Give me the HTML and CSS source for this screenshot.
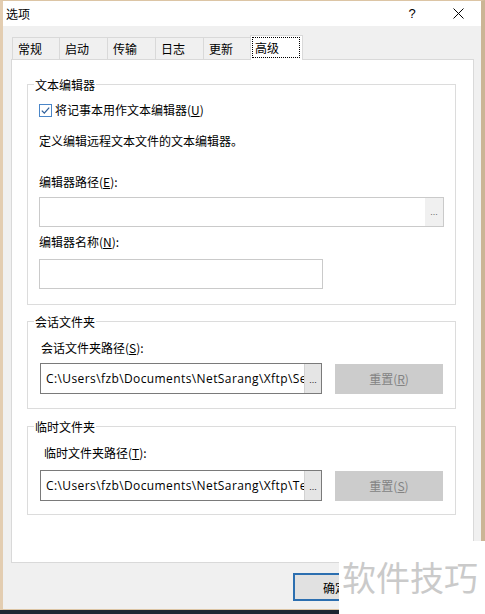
FILE: index.html
```html
<!DOCTYPE html>
<html lang="zh-CN">
<head>
<meta charset="utf-8">
<title>选项</title>
<link rel="stylesheet" href="styles.css">
</head>
<body>
<div class="window">
  <div class="titlebar">
    <span class="title">选项</span>
    <span class="help">?</span>
    <span class="close">
      <svg width="11" height="11" viewBox="0 0 11 11"><path d="M0.5 0.5 L10.5 10.5 M10.5 0.5 L0.5 10.5" stroke="#000" stroke-width="1" fill="none"/></svg>
    </span>
  </div>
  <div class="tabs">
    <div class="tab w48">常规</div>
    <div class="tab w49">启动</div>
    <div class="tab w49">传输</div>
    <div class="tab w49">日志</div>
    <div class="tab w48">更新</div>
    <div class="tab active"><span class="focus">高级</span></div>
  </div>
  <div class="panel">
    <div class="group g1">
      <div class="legend">文本编辑器</div>
      <div class="check">
        <svg class="box" width="13" height="13" viewBox="0 0 13 13"><rect x="0.5" y="0.5" width="12" height="12" fill="#fff" stroke="#4a86c8"/><path d="M2.8 6.6 L5.3 9.1 L10.2 3.6" stroke="#2f5f9a" stroke-width="1.3" fill="none"/></svg>
        <span class="line">将记事本用作文本编辑器(<u>U</u>)</span>
      </div>
      <div class="line desc">定义编辑远程文本文件的文本编辑器。</div>
      <div class="line lbl-path">编辑器路径(<u>E</u>):</div>
      <div class="field wide"><span class="browse-light">...</span></div>
      <div class="line lbl-name">编辑器名称(<u>N</u>):</div>
      <div class="field name"></div>
    </div>
    <div class="group g2">
      <div class="legend">会话文件夹</div>
      <div class="line lbl-g2">会话文件夹路径(<u>S</u>):</div>
      <div class="row r2">
        <div class="path"><span class="ptext">C:\Users\fzb\Documents\NetSarang\Xftp\Sessions</span><span class="pbtn">...</span></div>
        <div class="reset">重置(<u>R</u>)</div>
      </div>
    </div>
    <div class="group g3">
      <div class="legend">临时文件夹</div>
      <div class="line lbl-g3">临时文件夹路径(<u>T</u>):</div>
      <div class="row r3">
        <div class="path"><span class="ptext">C:\Users\fzb\Documents\NetSarang\Xftp\Temp</span><span class="pbtn">...</span></div>
        <div class="reset">重置(<u>S</u>)</div>
      </div>
    </div>
  </div>
  <div class="footer">
    <button class="btn ok">确定</button>
    <button class="btn">取消</button>
  </div>
</div>
<div class="watermark">软件技巧</div>
</body>
</html>
```
FILE: styles.css
```css
html, body {
  margin: 0;
  padding: 0;
}
body {
  width: 485px;
  height: 614px;
  position: relative;
  overflow: hidden;
  background: #1c2532;
  font-family: "Noto Sans CJK SC", "Noto Sans", sans-serif;
  font-size: 12px;
  color: #000;
}
.window {
  box-sizing: border-box;
  width: 485px;
  height: 610px;
  border-left: 3px solid #e3cdb1;
  border-top: 1px solid #dcc5a5;
  border-right: 4px solid #cbb595;
  border-bottom: 1px solid #dcc5a5;
  background: #f0f0f0;
  display: flex;
  flex-direction: column;
}
.titlebar {
  height: 25px;
  flex: none;
  background: #fff;
  display: flex;
  align-items: center;
}
.title {
  padding-left: 3px;
  line-height: 25px;
}
.help {
  margin-left: auto;
  width: 46px;
  text-align: center;
  font-family: "Liberation Sans", sans-serif;
  font-size: 13px;
  line-height: 25px;
}
.close {
  width: 46px;
  height: 25px;
  display: flex;
  align-items: center;
  justify-content: center;
}
.tabs {
  flex: none;
  display: flex;
  align-items: flex-end;
  height: 24px;
  margin-top: 9px;
  padding-left: 9px;
}
.tab {
  box-sizing: border-box;
  height: 22px;
  border: 1px solid #d9d9d9;
  border-bottom: none;
  background: #f0f0f0;
  line-height: 21px;
  padding-left: 5px;
  margin-left: -1px;
}
.tab:first-child {
  margin-left: 0;
}
.w48 { width: 48px; }
.w49 { width: 49px; }
.tab.active {
  width: 53px;
  height: 25px;
  margin-bottom: -1px;
  background: #fff;
  position: relative;
  z-index: 1;
  padding: 1px 2px 0 1px;
}
.focus {
  display: block;
  border: 1px dotted #000;
  line-height: 19px;
  padding-left: 2px;
}
.panel {
  flex: none;
  box-sizing: border-box;
  width: 463px;
  height: 504px;
  margin-left: 8px;
  border: 1px solid #d9d9d9;
  background: #fff;
  padding: 24px 0 0 15px;
}
.group {
  box-sizing: border-box;
  width: 429px;
  border: 1px solid #dcdcdc;
  padding: 0 11px;
}
.g1 { padding-bottom: 15px; }
.g2 { margin-top: 16px; padding-bottom: 14px; }
.g3 { margin-top: 17px; padding-bottom: 13px; }
.legend {
  width: fit-content;
  margin: -8px 0 0 -5px;
  padding: 0 1px;
  background: #fff;
  line-height: 16px;
}
.line {
  line-height: 16px;
}
.check {
  display: flex;
  align-items: center;
  gap: 3px;
  height: 16px;
  margin-top: 9px;
}
.box {
  flex: none;
  display: block;
}
.desc { margin-top: 15px; }
.lbl-path { margin-top: 25px; }
.lbl-name { margin-top: 7px; }
.field {
  box-sizing: border-box;
  height: 30px;
  border: 1px solid #cacaca;
  background: #fff;
  display: flex;
  justify-content: flex-end;
}
.wide {
  width: 405px;
  margin-top: 7px;
}
.name {
  width: 284px;
  margin-top: 9px;
}
.browse-light {
  width: 18px;
  background: #f0f0f0;
  color: #6a6a6a;
  font-family: "Liberation Sans", sans-serif;
  font-size: 9px;
  line-height: 9px;
  text-align: center;
  display: flex;
  align-items: flex-end;
  justify-content: center;
  padding-bottom: 9px;
  box-sizing: border-box;
}
.lbl-g2 { margin-top: 10px; margin-left: 2px; }
.lbl-g3 { margin-top: 10px; margin-left: 5px; }
.row {
  display: flex;
  align-items: center;
  margin-left: 1px;
}
.r2 { margin-top: 7px; }
.r3 { margin-top: 9px; }
.path {
  box-sizing: border-box;
  width: 282px;
  height: 31px;
  border: 1px solid #7a7a7a;
  background: #fff;
  display: flex;
}
.ptext {
  flex: 1;
  overflow: hidden;
  white-space: nowrap;
  padding-left: 5px;
  line-height: 29px;
  font-family: "Open Sans", "Noto Sans", sans-serif;
  font-size: 12px;
  letter-spacing: 0.4px;
}
.pbtn {
  flex: none;
  box-sizing: border-box;
  width: 17px;
  background: #e5e5e5;
  border-left: 1px solid #d2d2d2;
  font-family: "Liberation Sans", sans-serif;
  font-size: 9px;
  line-height: 9px;
  color: #222;
  display: flex;
  align-items: flex-end;
  justify-content: center;
  padding-bottom: 8px;
}
.reset {
  box-sizing: border-box;
  width: 108px;
  height: 30px;
  margin-left: 13px;
  background: #cccccc;
  color: #838383;
  display: flex;
  align-items: center;
  justify-content: center;
}
.footer {
  flex: 1;
  display: flex;
  align-items: flex-start;
  gap: 9px;
  padding: 10px 0 0 290px;
}
.btn {
  box-sizing: border-box;
  width: 84px;
  height: 28px;
  border: 1px solid #adadad;
  background: #e1e1e1;
  font-family: "Noto Sans CJK SC", sans-serif;
  font-size: 12px;
  color: #000;
  padding: 0;
}
.btn.ok {
  border: 2px solid #2c6fb0;
}
.watermark {
  position: absolute;
  left: 339px;
  top: 541px;
  width: 146px;
  height: 73px;
  box-sizing: border-box;
  background: #fff;
  color: #cacaca;
  font-size: 34px;
  line-height: 34px;
  padding: 19px 0 0 3px;
  white-space: nowrap;
}
```
